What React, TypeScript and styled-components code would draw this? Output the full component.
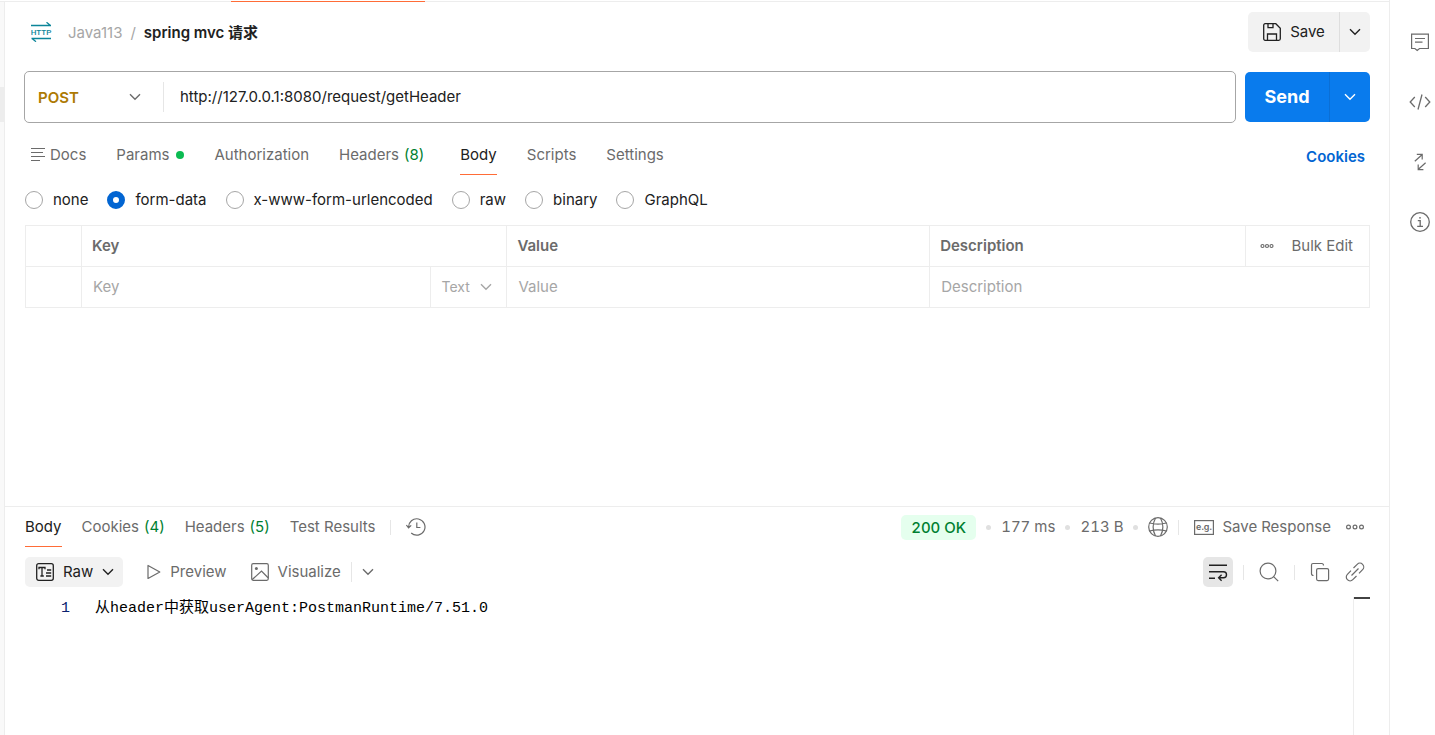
import React from "react";
import styled, { createGlobalStyle, css } from "styled-components";

const color = {
  text: "#212121",
  muted: "#6b6b6b",
  faint: "#a6a6a6",
  line: "#ededed",
  orange: "#ff6c37",
  green: "#007f31",
  blue: "#0265d2",
  send: "#097bed",
};

const GlobalStyle = createGlobalStyle`
  *, *::before, *::after { box-sizing: border-box; }
  body {
    margin: 0;
    background: #fff;
    color: ${color.text};
    font: 400 15px/20px Inter, "Noto Sans CJK SC", sans-serif;
  }
  button, input, select {
    font: inherit;
    color: inherit;
    background: none;
    border: 0;
    padding: 0;
    margin: 0;
  }
  button { cursor: pointer; }
  svg { display: block; flex: none; }
`;

/* ---------- Frame ---------- */

const Shell = styled.div`
  display: flex;
  min-height: 100vh;
`;

const Workspace = styled.div`
  flex: 1;
  min-width: 0;
  display: flex;
  flex-direction: column;
`;

const TabStrip = styled.div`
  display: flex;
  align-items: flex-end;
  height: 2px;
  padding-left: 231px;
  box-shadow: inset 0 -1px ${color.line};
`;

const ActiveTabEdge = styled.div`
  width: 194px;
  height: 1px;
  background: ${color.orange};
`;

const WorkspaceBody = styled.div`
  flex: 1;
  display: flex;
`;

const SidebarEdge = styled.div`
  width: 5px;
  padding-top: 85px;
  background: #f9f9f9;
  border-right: 1px solid ${color.line};
`;

const SidebarSelection = styled.div`
  height: 35px;
  background: ${color.line};
`;

const Main = styled.main`
  flex: 1;
  min-width: 0;
  display: flex;
  flex-direction: column;
`;

const RequestPane = styled.section`
  flex: 13 1 0;
  padding: 10px 19px 0 20px;
`;

const ResponsePane = styled.section`
  flex: 6 1 0;
  display: flex;
  flex-direction: column;
  padding: 0 19px 0 20px;
  border-top: 1px solid ${color.line};
`;

const Rail = styled.aside`
  width: 46px;
  display: flex;
  flex-direction: column;
  align-items: center;
  gap: 40px;
  padding: 32px 0 0 14px;
  border-left: 1px solid ${color.line};
  color: ${color.muted};
`;

const Row = styled.div<{ $gap?: number }>`
  display: flex;
  align-items: center;
  gap: ${(p) => p.$gap ?? 0}px;
`;

const Spread = styled(Row)`
  justify-content: space-between;
`;

const IconButton = styled.button<{ $on?: boolean }>`
  display: flex;
  align-items: center;
  justify-content: center;
  border-radius: 5px;
  color: ${color.muted};
  ${(p) =>
    p.$on &&
    css`
      width: 30px;
      height: 30px;
      background: #e6e6e6;
      color: ${color.text};
    `}
`;

const Divider = styled.span<{ $h?: number }>`
  width: 1px;
  height: ${(p) => p.$h ?? 15}px;
  background: #e6e6e6;
`;

/* ---------- Request header ---------- */

const Crumbs = styled.nav`
  display: flex;
  align-items: center;
  padding-left: 6px;
  color: ${color.faint};
  line-height: 22px;
  svg { margin-right: 16px; }
  a, span, h1 { padding-top: 2px; }
`;

const Crumb = styled.a`
  color: inherit;
  text-decoration: none;
`;

const Slash = styled.span`
  margin: 0 8px;
`;

const Title = styled.h1`
  margin: 0;
  font-size: 15px;
  font-weight: 600;
  color: ${color.text};
`;

const SplitButton = styled.div<{ $primary?: boolean }>`
  display: flex;
  width: ${(p) => (p.$primary ? 125 : 122)}px;
  height: ${(p) => (p.$primary ? 50 : 40)}px;
  border-radius: 5px;
  background: ${(p) => (p.$primary ? color.send : "#f2f2f2")};
  color: ${(p) => (p.$primary ? "#fff" : color.text)};
  button {
    display: flex;
    align-items: center;
    justify-content: center;
    gap: 8px;
  }
  button:first-child {
    flex: 1;
    font-size: ${(p) => (p.$primary ? 18 : 15)}px;
    font-weight: ${(p) => (p.$primary ? 700 : 400)};
  }
  button:last-child {
    width: ${(p) => (p.$primary ? 41 : 31)}px;
    border-left: 1px solid ${(p) => (p.$primary ? "#0a6fd6" : "#dedede")};
  }
`;

const UrlRow = styled.div`
  display: flex;
  align-items: center;
  gap: 9px;
  margin: 19px 0 0 -1px;
`;

const UrlBox = styled.div`
  flex: 1;
  display: flex;
  align-items: center;
  height: 52px;
  border: 1px solid ${color.faint};
  border-radius: 5px;
`;

const SelectWrap = styled.label`
  display: flex;
  align-items: center;
  justify-content: space-between;
  select {
    appearance: none;
    flex: 1;
    min-width: 0;
    outline: 0;
  }
  svg { pointer-events: none; }
`;

const Method = styled(SelectWrap)`
  width: 138px;
  padding: 0 22px 0 13px;
  color: ${color.muted};
  select {
    padding-top: 2px;
    font-weight: 600;
    color: #ad7a03;
  }
`;

const UrlInput = styled.input`
  flex: 1;
  min-width: 0;
  padding: 0 16px;
  outline: 0;
`;

/* ---------- Tabs ---------- */

const Tabs = styled.div<{ $gap: number }>`
  display: flex;
  align-items: flex-start;
  gap: ${(p) => p.$gap}px;
`;

const Tab = styled.button<{ $active?: boolean; $slot?: boolean }>`
  display: flex;
  align-items: center;
  height: 30px;
  padding: 0 ${(p) => (p.$slot ? 6 : 0)}px 10px 0;
  gap: 5px;
  white-space: nowrap;
  color: ${(p) => (p.$active ? color.text : color.muted)};
  box-shadow: ${(p) => (p.$active ? `inset 0 -1px ${color.orange}` : "none")};
`;

const RequestTabs = styled(Spread)`
  align-items: flex-start;
  margin-top: 22px;
  padding: 0 5px 0 6px;
`;

const Count = styled.span`
  color: ${color.green};
`;

const Dot = styled.i`
  width: 5px;
  height: 5px;
  border-radius: 50%;
  background: #e0e0e0;
`;

const FilledDot = styled(Dot)`
  width: 8px;
  height: 8px;
  margin-left: 2px;
  background: #0cbb52;
`;

const CookiesLink = styled.a`
  padding-top: 2px;
  font-weight: 600;
  color: ${color.blue};
  text-decoration: none;
`;

/* ---------- Body type ---------- */

const Radios = styled.div`
  display: flex;
  gap: 19px;
  margin-top: 15px;
`;

const RadioLabel = styled.label`
  display: flex;
  align-items: center;
  gap: 10px;
`;

const Radio = styled.input`
  appearance: none;
  width: 18px;
  height: 18px;
  border: 1px solid ${color.faint};
  border-radius: 50%;
  &:checked {
    border: 6px solid ${color.blue};
  }
`;

/* ---------- Parameter table ---------- */

const Table = styled.table`
  width: 100%;
  margin-top: 15px;
  table-layout: fixed;
  border-collapse: collapse;
  th, td {
    height: 41px;
    padding: 0 10px;
    border: 1px solid ${color.line};
    text-align: left;
    font-weight: 400;
  }
  th { color: ${color.muted}; font-weight: 600; }
  td { color: ${color.faint}; }
`;

const Col = styled.col<{ $w?: string }>`
  width: ${(p) => p.$w ?? "auto"};
`;

const CellInput = styled.input`
  width: 100%;
  padding-left: 1px;
  outline: 0;
  &::placeholder { color: ${color.faint}; opacity: 1; }
`;

const TypeSelect = styled(SelectWrap)`
  padding-right: 4px;
  font-size: 14px;
`;

const TableActions = styled(Spread)`
  padding: 0 6px 0 4px;
  font-weight: 400;
`;

/* ---------- Response ---------- */

const ResponseBar = styled(Spread)`
  align-items: flex-start;
  padding: 10px 6px 0 0;
`;

const ResponseTabs = styled(Row)`
  align-items: flex-start;
`;

const Meta = styled(Row)`
  height: 20px;
  color: ${color.muted};
  white-space: nowrap;
  font-variant-numeric: tabular-nums;
`;

const Status = styled.span`
  height: 25px;
  padding: 0 10px;
  border-radius: 5px;
  line-height: 25px;
  font-weight: 500;
  color: ${color.green};
  background: #e5ffee;
`;

const SaveResponse = styled.button`
  display: flex;
  align-items: center;
  gap: 8px;
  padding-left: 5px;
`;

const History = styled(Row)`
  height: 20px;
  color: ${color.muted};
`;

const ViewBar = styled(Spread)`
  margin-top: 10px;
  padding-right: 5px;
`;

const ViewButton = styled.button<{ $on?: boolean }>`
  display: flex;
  align-items: center;
  gap: 9px;
  height: 30px;
  border-radius: 5px;
  padding: ${(p) => (p.$on ? "0 9px 0 11px" : "0")};
  color: ${(p) => (p.$on ? color.text : color.muted)};
  background: ${(p) => (p.$on ? "#f2f2f2" : "none")};
`;

const Editor = styled.div`
  flex: 1;
  display: flex;
  margin-top: 10px;
  font-family: "Liberation Mono", "Noto Sans CJK SC", monospace;
  color: #000;
`;

const LineNumber = styled.span`
  width: 45px;
  padding-top: 2px;
  text-align: right;
  color: #0b216f;
`;

const Code = styled.code`
  flex: 1;
  padding: 2px 0 0 25px;
  font: inherit;
`;

const Ruler = styled.div`
  width: 17px;
  border-left: 1px solid ${color.line};
  &::before {
    content: "";
    display: block;
    height: 2px;
    background: #424242;
  }
`;

/* ---------- Icons ---------- */

type IconProps = { w?: number; h?: number; sw?: number; children: React.ReactNode };

const Icon = ({ w = 20, h = 20, sw = 1.2, children }: IconProps) => (
  <svg width={w} height={h} viewBox={`0 0 ${w} ${h}`} fill="none" stroke="currentColor" strokeWidth={sw} aria-hidden="true">
    {children}
  </svg>
);

const Chevron = () => (
  <Icon w={12} h={8} sw={1.4}>
    <path d="M1 1.2 6 6.2l5-5" />
  </Icon>
);

const HttpIcon = () => (
  <svg width="21" height="20" viewBox="0 0 21 20" fill="none" stroke="#0b8599" strokeWidth="1.3" aria-hidden="true">
    <path d="M0 3.5h20M15.5.3 19.5 3.5M20 16.5H.5M1 16.5l4 3.2" />
    <text x="10" y="13" textAnchor="middle" fontFamily="Roboto" fontSize="8" fontWeight="500" fill="#0b8599" stroke="none">
      HTTP
    </text>
  </svg>
);

const SaveIcon = () => (
  <Icon sw={1.3}>
    <path d="M1.7 3.2c0-.8.6-1.5 1.5-1.5h10.6l4.5 4.5v10.6c0 .9-.7 1.5-1.5 1.5H3.2c-.9 0-1.5-.7-1.5-1.5zM6 1.7v4h5v-4M5.5 18v-6h9v6" />
  </Icon>
);

const DocsIcon = () => (
  <Icon w={14} h={14}>
    <path d="M0 .5h14M0 4.500h12M0 8.500h14M0 12.500h9" />
  </Icon>
);

const MoreIcon = ({ w = 18 }: { w?: number }) => (
  <Icon w={w} h={6}>
    <circle cx={2.5} cy={3} r={w > 15 ? 1.9 : 1.5} />
    <circle cx={w / 2} cy={3} r={w > 15 ? 1.9 : 1.5} />
    <circle cx={w - 2.5} cy={3} r={w > 15 ? 1.9 : 1.5} />
  </Icon>
);

const CommentIcon = () => (
  <Icon>
    <path d="M1.6 2.1h16.8v14.4H9.5l-2.3 2-2.3-2H1.6zM5 6.5h10M5 10.2h7.5" />
  </Icon>
);

const CodeIcon = () => (
  <Icon w={22} sw={1.3}>
    <path d="M5.8 5 1.2 10l4.6 5M16.2 5l4.6 5-4.6 5M13 2.500 9 17.500" />
  </Icon>
);

const ResizeIcon = () => (
  <Icon>
    <path d="M4.8 9.3 12 2.8M6.8 2.3h5.4v5.2M15.6 10.7 8.4 17.2M13.4 17.7H8.200v-5.200" />
  </Icon>
);

const InfoIcon = () => (
  <Icon sw={1.3}>
    <circle cx={10} cy={10} r={9.3} />
    <path d="M7.8 8.6h2.4v5.6M7.2 14.3h5.8" />
    <circle cx={10} cy={5.8} r={0.9} fill="currentColor" stroke="none" />
  </Icon>
);

const HistoryIcon = () => (
  <Icon>
    <path d="M2.600 10.500A8.200 8.200 0 1 1 5.200 16M.4 8l2.200 2.800L5.200 8.400M10.800 5.500v5h3.600" />
  </Icon>
);

const GlobeIcon = () => (
  <Icon>
    <circle cx={10} cy={10} r={9.3} />
    <path d="M7.500 1C4.600 6.500 4.600 13.500 7.500 19M12.500 1c2.900 5.500 2.900 12.500 0 18M1.500 6c5 1.300 12 1.300 17 0M1.500 14c5-1.300 12-1.300 17 0" />
  </Icon>
);

const ExampleIcon = () => (
  <svg width="20" height="15" viewBox="0 0 20 15" fill="none" stroke="currentColor" strokeWidth="1.2" aria-hidden="true">
    <rect x=".6" y=".6" width="18.8" height="13.8" />
    <text x="10" y="10" textAnchor="middle" fontFamily="Inter" fontSize="9" fontWeight="600" fill="currentColor" stroke="none">
      e.g.
    </text>
  </svg>
);

const RawIcon = () => (
  <Icon w={18} h={18} sw={1.3}>
    <rect x={0.7} y={0.7} width={16.6} height={16.6} rx={2} />
    <path d="M3 6.200V4.500h6v1.700M6 4.500v8.300M4.400 13h3.400M11 7h4.200M10 10h5.200M10 13h5.200" />
  </Icon>
);

const PlayIcon = () => (
  <Icon w={14} h={16}>
    <path d="M1 1.500v13L12.800 8z" strokeLinejoin="round" />
  </Icon>
);

const ImageIcon = () => (
  <Icon w={18} h={18}>
    <rect x={0.7} y={0.7} width={16.6} height={16.6} rx={1.5} />
    <path d="M1 16.800 10.500 8l6.800 7" />
    <circle cx={5.4} cy={5.4} r={1.5} fill="currentColor" stroke="none" />
  </Icon>
);

const WrapIcon = () => (
  <Icon sw={1.4}>
    <path d="M1 3.300h18M1 9.700h14.500c4 0 4 6 0 6H11M13.600 12.800l-3 2.900 3 3M1 16.300h6" />
  </Icon>
);

const SearchIcon = () => (
  <Icon>
    <circle cx={9} cy={9} r={7.9} />
    <path d="m14.600 14.600 4.600 4.600" />
  </Icon>
);

const CopyIcon = () => (
  <Icon>
    <rect x={6.6} y={6.6} width={12} height={12} rx={1.5} />
    <path d="M3.500 13.500C2.200 13.500 1.500 12.800 1.500 11.800V3c0-1 .6-1.500 1.500-1.500h8.800c1 0 1.700.7 1.700 2" />
  </Icon>
);

const LinkIcon = () => (
  <Icon>
    <path d="m6.500 13.500 7-7M8.500 6l3.700-3.700a3.700 3.700 0 0 1 5.400 5.400L14 11.400M11.500 14l-3.700 3.700a3.700 3.700 0 0 1-5.400-5.400L6 8.600" />
  </Icon>
);

/* ---------- Page ---------- */

const bodyTypes = ["none", "form-data", "x-www-form-urlencoded", "raw", "binary", "GraphQL"];

export default function App() {
  const [bodyType, setBodyType] = React.useState("form-data");
  return (
    <Shell>
      <GlobalStyle />
      <Workspace>
        <TabStrip>
          <ActiveTabEdge />
        </TabStrip>
        <WorkspaceBody>
          <SidebarEdge>
            <SidebarSelection />
          </SidebarEdge>
          <Main>
            <RequestPane>
              <Spread>
                <Crumbs aria-label="Breadcrumb">
                  <HttpIcon />
                  <Crumb href="#collection">Java113</Crumb>
                  <Slash>/</Slash>
                  <Title>spring mvc 请求</Title>
                </Crumbs>
                <SplitButton>
                  <button type="button">
                    <SaveIcon />
                    Save
                  </button>
                  <button type="button" aria-label="Save options">
                    <Chevron />
                  </button>
                </SplitButton>
              </Spread>

              <UrlRow>
                <UrlBox>
                  <Method>
                    <select aria-label="Method" defaultValue="POST">
                      <option>POST</option>
                    </select>
                    <Chevron />
                  </Method>
                  <Divider $h={30} />
                  <UrlInput aria-label="Request URL" defaultValue="http://127.0.0.1:8080/request/getHeader" />
                </UrlBox>
                <SplitButton $primary>
                  <button type="button">Send</button>
                  <button type="button" aria-label="Send options">
                    <Chevron />
                  </button>
                </SplitButton>
              </UrlRow>

              <RequestTabs>
                <Tabs $gap={30}>
                  <Tab type="button">
                    <DocsIcon />
                    Docs
                  </Tab>
                  <Tab type="button">
                    Params <FilledDot />
                  </Tab>
                  <Tab type="button">Authorization</Tab>
                  <Tab type="button" $slot>
                    Headers <Count>(8)</Count>
                  </Tab>
                  <Tab type="button" $active>
                    Body
                  </Tab>
                  <Tab type="button">Scripts</Tab>
                  <Tab type="button">Settings</Tab>
                </Tabs>
                <CookiesLink href="#cookies">Cookies</CookiesLink>
              </RequestTabs>

              <Radios role="radiogroup" aria-label="Body type">
                {bodyTypes.map((type) => (
                  <RadioLabel key={type}>
                    <Radio type="radio" name="body-type" checked={bodyType === type} onChange={() => setBodyType(type)} />
                    {type}
                  </RadioLabel>
                ))}
              </Radios>

              <Table>
                <colgroup>
                  <Col $w="56px" />
                  <Col $w="26%" />
                  <Col $w="76px" />
                  <Col />
                  <Col $w="23.5%" />
                  <Col $w="124px" />
                </colgroup>
                <thead>
                  <tr>
                    <th />
                    <th colSpan={2}>Key</th>
                    <th>Value</th>
                    <th>Description</th>
                    <th>
                      <TableActions>
                        <IconButton type="button" aria-label="Column options">
                          <MoreIcon w={14} />
                        </IconButton>
                        <button type="button">Bulk Edit</button>
                      </TableActions>
                    </th>
                  </tr>
                </thead>
                <tbody>
                  <tr>
                    <td />
                    <td>
                      <CellInput aria-label="Key" placeholder="Key" />
                    </td>
                    <td>
                      <TypeSelect>
                        <select aria-label="Value type" defaultValue="Text">
                          <option>Text</option>
                        </select>
                        <Chevron />
                      </TypeSelect>
                    </td>
                    <td>
                      <CellInput aria-label="Value" placeholder="Value" />
                    </td>
                    <td colSpan={2}>
                      <CellInput aria-label="Description" placeholder="Description" />
                    </td>
                  </tr>
                </tbody>
              </Table>
            </RequestPane>

            <ResponsePane>
              <ResponseBar>
                <ResponseTabs $gap={15}>
                  <Tabs $gap={20}>
                    <Tab type="button" $active>
                      Body
                    </Tab>
                    <Tab type="button">
                      Cookies <Count>(4)</Count>
                    </Tab>
                    <Tab type="button">
                      Headers <Count>(5)</Count>
                    </Tab>
                    <Tab type="button">Test Results</Tab>
                  </Tabs>
                  <History $gap={15}>
                    <Divider />
                    <IconButton type="button" aria-label="History">
                      <HistoryIcon />
                    </IconButton>
                  </History>
                </ResponseTabs>
                <Meta $gap={10}>
                  <Status>200 OK</Status>
                  <Dot />
                  <span>177 ms</span>
                  <Dot />
                  <span>213 B</span>
                  <Dot />
                  <GlobeIcon />
                  <Divider />
                  <Row $gap={15}>
                    <SaveResponse type="button">
                      <ExampleIcon />
                      Save Response
                    </SaveResponse>
                    <IconButton type="button" aria-label="More">
                      <MoreIcon />
                    </IconButton>
                  </Row>
                </Meta>
              </ResponseBar>

              <ViewBar>
                <Row $gap={24}>
                  <ViewButton type="button" $on>
                    <RawIcon />
                    Raw
                    <Chevron />
                  </ViewButton>
                  <ViewButton type="button">
                    <PlayIcon />
                    Preview
                  </ViewButton>
                  <Row $gap={10}>
                    <ViewButton type="button">
                      <ImageIcon />
                      Visualize
                    </ViewButton>
                    <Divider $h={20} />
                    <IconButton type="button" aria-label="Visualize options">
                      <Chevron />
                    </IconButton>
                  </Row>
                </Row>
                <Row $gap={15}>
                  <Row $gap={10}>
                    <IconButton type="button" $on aria-label="Wrap lines">
                      <WrapIcon />
                    </IconButton>
                    <Divider />
                  </Row>
                  <IconButton type="button" aria-label="Search">
                    <SearchIcon />
                  </IconButton>
                  <Divider />
                  <IconButton type="button" aria-label="Copy">
                    <CopyIcon />
                  </IconButton>
                  <IconButton type="button" aria-label="Copy link">
                    <LinkIcon />
                  </IconButton>
                </Row>
              </ViewBar>

              <Editor>
                <LineNumber>1</LineNumber>
                <Code>从header中获取userAgent:PostmanRuntime/7.51.0</Code>
                <Ruler />
              </Editor>
            </ResponsePane>
          </Main>
        </WorkspaceBody>
      </Workspace>
      <Rail>
        <IconButton type="button" aria-label="Comments">
          <CommentIcon />
        </IconButton>
        <IconButton type="button" aria-label="Code">
          <CodeIcon />
        </IconButton>
        <IconButton type="button" aria-label="Related">
          <ResizeIcon />
        </IconButton>
        <IconButton type="button" aria-label="Info">
          <InfoIcon />
        </IconButton>
      </Rail>
    </Shell>
  );
}
